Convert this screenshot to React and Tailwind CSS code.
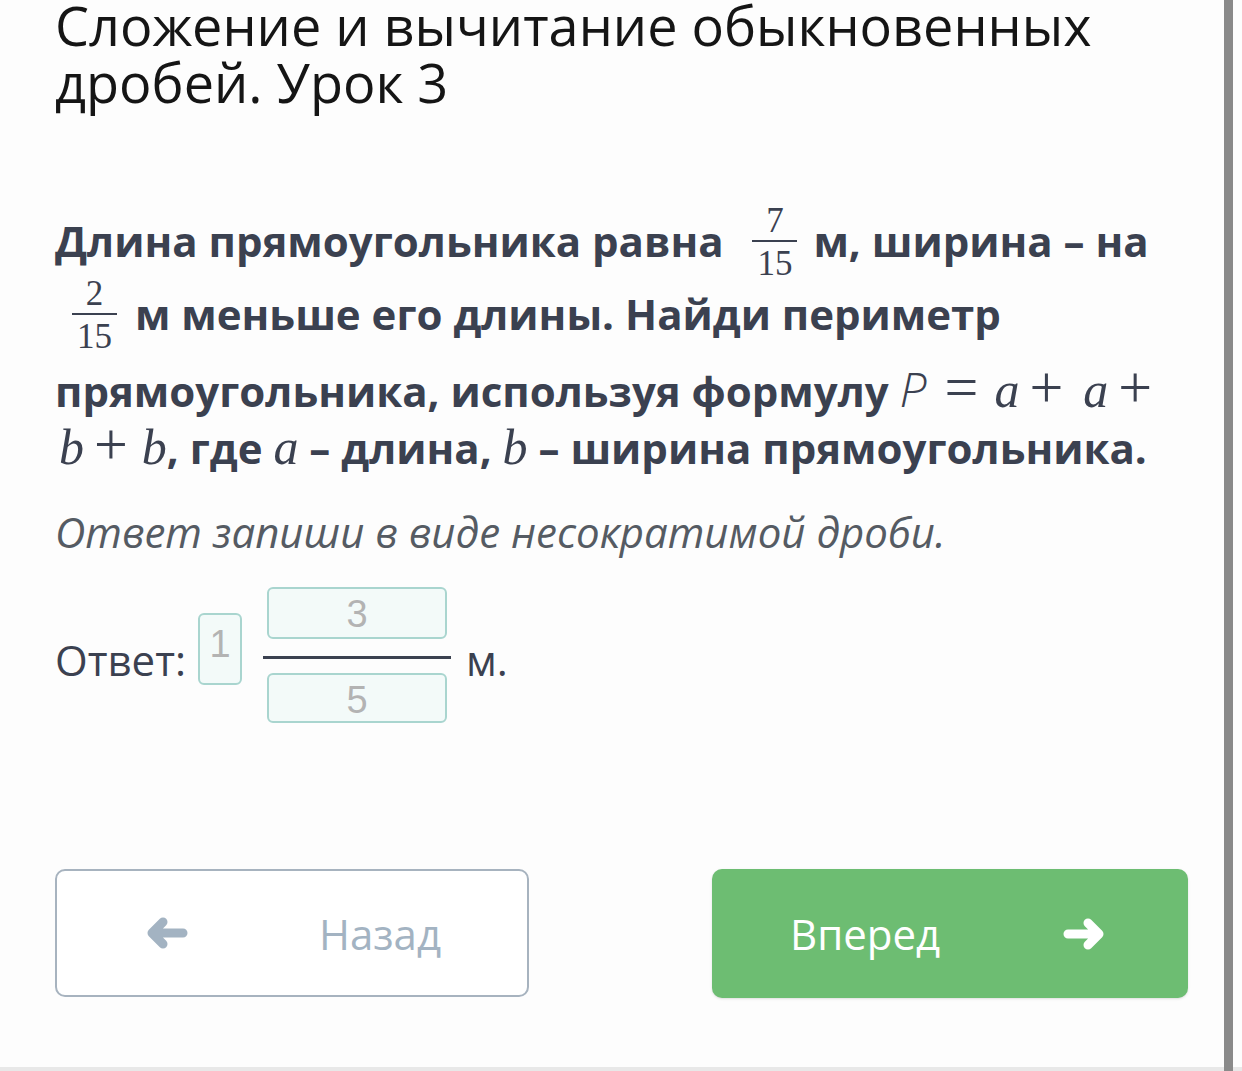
import React from "react";

const ink = "text-[#3b4150]";

const Frac = ({ n, d, className = "" }) => (
  <span
    className={`inline-flex flex-col items-center align-[25px] font-['Liberation_Serif',serif] font-normal text-[35px] leading-none ${ink} ${className}`}
  >
    <span className="px-[5px]">{n}</span>
    <span className="mt-[2px] h-[2px] self-stretch bg-[#3b4150]" />
    <span className="mt-[4px] px-[5px]">{d}</span>
  </span>
);

// serif math letter (KaTeX-like)
const V = ({ children, className = "" }) => (
  <span className={`font-['Liberation_Serif',serif] text-[50px] font-normal italic leading-[40px] ${className}`}>
    {children}
  </span>
);

// serif operator
const Op = ({ children, className = "" }) => (
  <span className={`font-['Liberation_Serif',serif] text-[60px] font-normal leading-[40px] ${className}`}>
    {children}
  </span>
);

const ArrowLeft = ({ color }) => (
  <svg width="44" height="34" viewBox="0 0 44 34" fill="none">
    <path d="M14 17H38M18 6L7 17L18 28" stroke={color} strokeWidth="9" strokeLinecap="round" strokeLinejoin="round" />
  </svg>
);

const ArrowRight = ({ color }) => (
  <svg width="44" height="34" viewBox="0 0 44 34" fill="none">
    <path d="M30 17H6M26 6L37 17L26 28" stroke={color} strokeWidth="9" strokeLinecap="round" strokeLinejoin="round" />
  </svg>
);

const inputBox =
  "rounded-[6px] border-2 border-[#a9d5cf] bg-[#f3faf9] font-['Liberation_Sans',Arial,sans-serif] text-[38px] text-[#b3b3b3] text-center";

export default function App() {
  return (
    <div className="flex h-[1071px] w-[1242px] overflow-hidden bg-[#fdfdfd] font-['Open_Sans',sans-serif]">
      <div className="flex w-[1224px] flex-col">
        <div className="flex-1 pl-[55px] pr-[20px]">
          {/* Title */}
          <h1 className="-mt-[3px] whitespace-nowrap text-[54px] font-normal leading-[57px] text-[#151515]">
            Сложение и вычитание обыкновенных
            <br />
            дробей. Урок 3
          </h1>

          {/* Task */}
          <div className={`mt-[92px] whitespace-nowrap text-[42px] font-bold leading-[57px] ${ink}`}>
            <div>
              Длина прямоугольника равна <Frac className="ml-[18px] mr-[5px]" n="7" d="15" /> м, ширина – на
            </div>
            <div className="-mt-[5px]">
              <Frac className="ml-[17px] mr-[7px]" n="2" d="15" /> м меньше его длины. Найди периметр
            </div>
            <div className="mt-[8px]">
              прямоугольника, используя формулу{" "}
              <span className="text-[48px] font-light italic leading-[40px]">P</span>
              <Op className="ml-[18px]">=</Op>
              <V className="ml-[16px]">a</V>
              <Op className="ml-[10px]">+</Op>
              <V className="ml-[20px]">a</V>
              <Op className="ml-[10px]">+</Op>
            </div>
            <div>
              <V className="ml-[4px]">b</V>
              <Op className="ml-[10px]">+</Op>
              <V className="ml-[14px]">b</V>, где <V>a</V> – длина, <V>b</V> – ширина прямоугольника.
            </div>
          </div>

          <p className="mt-[27px] whitespace-nowrap text-[42px] italic leading-[57px] text-[#555b63]">
            Ответ запиши в виде несократимой дроби.
          </p>

          {/* Answer */}
          <div className="mt-[27px] flex items-start">
            <span className={`mt-[44px] text-[42px] leading-[57px] ${ink}`}>Ответ:</span>
            <div className={`ml-[12px] mt-[26px] h-[72px] w-[44px] pt-[4px] leading-[50px] ${inputBox}`}>1</div>
            <div className="ml-[21px] flex w-[188px] flex-col items-center">
              <div className={`h-[52px] w-[180px] leading-[50px] ${inputBox}`}>3</div>
              <div className="mt-[17px] h-[3px] w-full bg-[#3b4150]" />
              <div className={`mt-[14px] h-[50px] w-[180px] leading-[50px] ${inputBox}`}>5</div>
            </div>
            <span className={`ml-[15px] mt-[44px] text-[42px] leading-[57px] ${ink}`}>м.</span>
          </div>

          {/* Navigation */}
          <div className="mt-[146px] flex w-[1133px] justify-between">
            <button className="flex h-[128px] w-[474px] items-center rounded-[10px] border-2 border-[#a7b3bf] bg-white pl-[88px]">
              <ArrowLeft color="#a3b3c2" />
              <span className="ml-[130px] text-[42px] leading-[57px] text-[#a3b3c2]">Назад</span>
            </button>
            <button className="flex h-[129px] w-[476px] items-center justify-between rounded-[10px] bg-[#6dbd72] pl-[78px] pr-[82px] shadow-sm">
              <span className="text-[42px] leading-[57px] text-white">Вперед</span>
              <ArrowRight color="#ffffff" />
            </button>
          </div>
        </div>
        <div className="h-[4px] bg-[#e8e8e8]" />
      </div>
      <div className="w-[9px] bg-[#8a8a8a]" />
      <div className="flex flex-1 flex-col">
        <div className="flex-1" />
        <div className="h-[4px] bg-[#e8e8e8]" />
      </div>
    </div>
  );
}
